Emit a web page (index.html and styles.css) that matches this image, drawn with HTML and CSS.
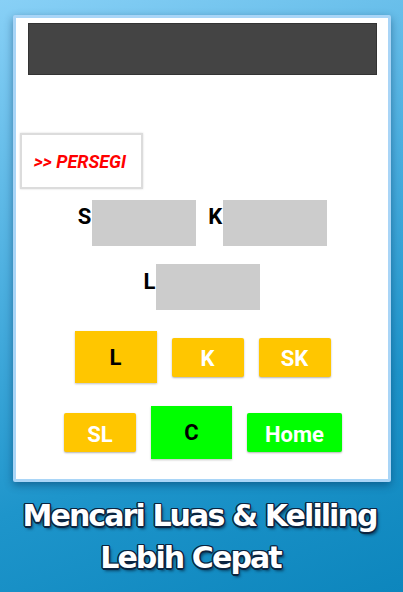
FILE: index.html
```html
<!DOCTYPE html>
<html>
<head>
<meta charset="utf-8">
<link rel="stylesheet" href="styles.css">
</head>
<body>
<div class="screen">
  <div class="panel">
    <div class="topbar"></div>
    <div class="title-box"><span class="title">&gt;&gt; PERSEGI</span></div>
    <div class="row row-sk">
      <div class="field"><span class="lbl">S</span><div class="input"></div></div>
      <div class="field"><span class="lbl">K</span><div class="input"></div></div>
    </div>
    <div class="row row-l">
      <div class="field"><span class="lbl">L</span><div class="input"></div></div>
    </div>
    <div class="btnrow btnrow1">
      <div class="btn big yellow dark">L</div>
      <div class="btn small yellow">K</div>
      <div class="btn small yellow">SK</div>
    </div>
    <div class="btnrow btnrow2">
      <div class="btn small yellow">SL</div>
      <div class="btn big green dark">C</div>
      <div class="btn small green home">Home</div>
    </div>
  </div>
  <div class="caption">
    <div class="line1">Mencari Luas &amp; Keliling</div>
    <div class="line2">Lebih Cepat</div>
  </div>
</div>
</body>
</html>
```
FILE: styles.css
```css
html, body {
  margin: 0;
  padding: 0;
}
body {
  width: 403px;
  height: 592px;
  overflow: hidden;
  font-family: Roboto, "Liberation Sans", sans-serif;
}
.screen {
  width: 403px;
  height: 592px;
  background: linear-gradient(160deg, #88d0f6 0%, #4aaedf 40%, #1e95cb 70%, #0d86bd 100%);
  padding-top: 15px;
  box-sizing: border-box;
}
.panel {
  margin-left: 13px;
  width: 378px;
  height: 467px;
  box-sizing: border-box;
  border: 3px solid #a9d5f7;
  border-radius: 2px;
  background: #fff;
  box-shadow: 0 3px 8px rgba(0, 40, 80, 0.45);
  padding-top: 5px;
}
.topbar {
  margin-left: 12px;
  width: 349px;
  height: 52px;
  box-sizing: border-box;
  background: #444444;
  border: 1px solid #333;
}
.title-box {
  margin-top: 58px;
  margin-left: 4px;
  width: 123px;
  height: 56px;
  box-sizing: border-box;
  border: 2px solid #dcdcdc;
  box-shadow: 0 0 2px rgba(0,0,0,0.15);
  display: flex;
  align-items: center;
  justify-content: center;
}
.title {
  color: #ff0000;
  font-style: italic;
  font-weight: bold;
  font-size: 18px;
  padding-top: 1px;
  margin-right: 3px;
}
.row {
  display: flex;
  justify-content: center;
  gap: 12px;
}
.row-sk {
  margin-top: 11px;
  padding-left: 1px;
}
.row-l {
  margin-top: 18px;
}
.field {
  display: flex;
  align-items: flex-start;
}
.lbl {
  font-weight: bold;
  font-size: 22px;
  color: #000;
  line-height: 22px;
  padding-top: 6px;
  margin-right: 1px;
}
.row-l .lbl {
  padding-top: 7px;
}
.input {
  width: 104px;
  height: 46px;
  background: #cccccc;
}
.btnrow {
  display: flex;
  justify-content: center;
  align-items: center;
  gap: 15px;
}
.btnrow1 {
  margin-top: 21px;
  padding-left: 1px;
}
.btnrow2 {
  margin-top: 23px;
  padding-left: 2px;
}
.btn {
  display: flex;
  align-items: center;
  justify-content: center;
  font-weight: bold;
  font-size: 22px;
  color: #fff;
  box-sizing: border-box;
}
.big {
  width: 82px;
  height: 52px;
  box-shadow: 0 1px 2px rgba(0,0,0,0.25);
}
.btnrow2 .big {
  width: 81px;
  height: 53px;
}
.small {
  width: 72px;
  height: 39px;
  border-radius: 2px;
  padding-top: 3px;
  box-shadow: 0 1px 2px rgba(0,0,0,0.3);
}
.home {
  width: 95px;
}
.yellow { background: #ffc600; }
.green { background: #00ff00; }
.dark { color: #000; }
.caption {
  margin-top: 12px;
  padding-right: 4px;
  text-align: center;
  font-family: "DejaVu Sans", sans-serif;
  font-weight: bold;
  color: #fff;
  font-size: 31px;
  line-height: 42px;
  text-shadow:
    -1px -1px 0 #0b2440, 1px -1px 0 #0b2440, -1px 1px 0 #0b2440, 1px 1px 0 #0b2440,
    0 -1.5px 0 #0b2440, 0 1.5px 0 #0b2440, -1.5px 0 0 #0b2440, 1.5px 0 0 #0b2440,
    2px 3px 3px rgba(0, 20, 40, 0.6);
}
.line1 {
  letter-spacing: -2px;
  transform: scaleX(0.97);
}
.line2 {
  letter-spacing: -2px;
  transform: scaleX(0.97);
  margin-right: 18px;
}
```
